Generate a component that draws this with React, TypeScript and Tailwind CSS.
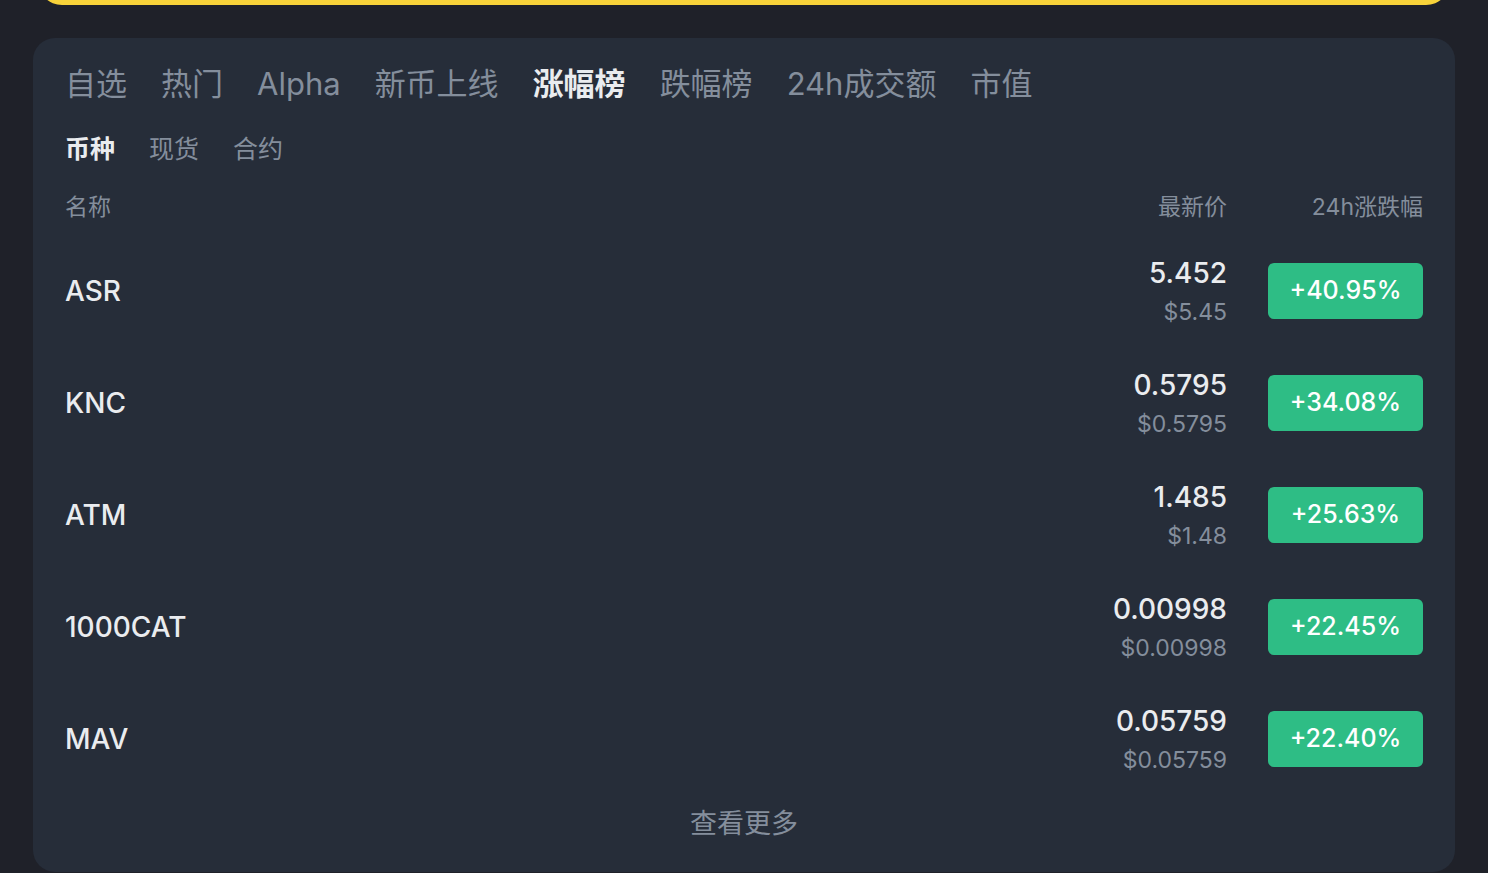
import React from 'react';

const font = { fontFamily: 'Inter, "Noto Sans CJK SC", sans-serif' };

interface Coin {
    symbol: string;
    price: string;
    usd: string;
    change: string;
}

const coins: Coin[] = [
    { symbol: 'ASR', price: '5.452', usd: '$5.45', change: '+40.95%' },
    { symbol: 'KNC', price: '0.5795', usd: '$0.5795', change: '+34.08%' },
    { symbol: 'ATM', price: '1.485', usd: '$1.48', change: '+25.63%' },
    { symbol: '1000CAT', price: '0.00998', usd: '$0.00998', change: '+22.45%' },
    { symbol: 'MAV', price: '0.05759', usd: '$0.05759', change: '+22.40%' },
];

const tabs = ['自选', '热门', 'Alpha', '新币上线', '涨幅榜', '跌幅榜', '24h成交额', '市值'];
const subTabs = ['币种', '现货', '合约'];

export default function App() {
    return (
        <div className="min-h-screen overflow-hidden bg-[#1f2129] px-[33px]" style={font}>
            {/* bottom of the yellow button above */}
            <div className="mx-[5px] -mt-[43px] h-[48px] rounded-[24px] bg-[#f8d33a]" />

            <div className="mt-[33px] rounded-[22px] bg-[#262d39] px-[32px] pt-[26px] pb-[30px]">
                {/* main tabs */}
                <div className="flex gap-[34px] text-[31px] leading-[40px]">
                    {tabs.map((t) => (
                        <span
                            key={t}
                            className={t === '涨幅榜' ? 'font-semibold text-[#eaecef]' : 'text-[#848e9c]'}
                        >
                            {t}
                        </span>
                    ))}
                </div>

                {/* sub tabs */}
                <div className="mt-[28px] flex gap-[34px] text-[25px] leading-[34px]">
                    {subTabs.map((t, i) => (
                        <span key={t} className={i === 0 ? 'font-semibold text-[#eaecef]' : 'text-[#848e9c]'}>
                            {t}
                        </span>
                    ))}
                </div>

                {/* header */}
                <div className="mt-[25px] flex items-center text-[23px] leading-[32px] text-[#848e9c]">
                    <span className="flex-1">名称</span>
                    <span className="text-right">最新价</span>
                    <span className="ml-[41px] w-[155px] text-right">24h涨跌幅</span>
                </div>

                {/* rows */}
                <div className="mt-[12px]">
                    {coins.map((c) => (
                        <div key={c.symbol} className="flex h-[112px] items-center">
                            <span className="flex-1 text-[28px] font-medium text-[#eaecef]">{c.symbol}</span>
                            <div className="flex flex-col items-end gap-[7px]">
                                <span className="text-[28px] leading-[34px] font-medium text-[#eaecef]">{c.price}</span>
                                <span className="text-[23px] leading-[30px] text-[#848e9c]">{c.usd}</span>
                            </div>
                            <div className="ml-[41px] flex h-[56px] w-[155px] items-center justify-center rounded-[6px] bg-[#2ebd85] text-[25px] font-medium text-white">
                                {c.change}
                            </div>
                        </div>
                    ))}
                </div>

                <div className="mt-[11px] text-center text-[27px] leading-[36px] text-[#848e9c]">查看更多</div>
            </div>
        </div>
    );
}
